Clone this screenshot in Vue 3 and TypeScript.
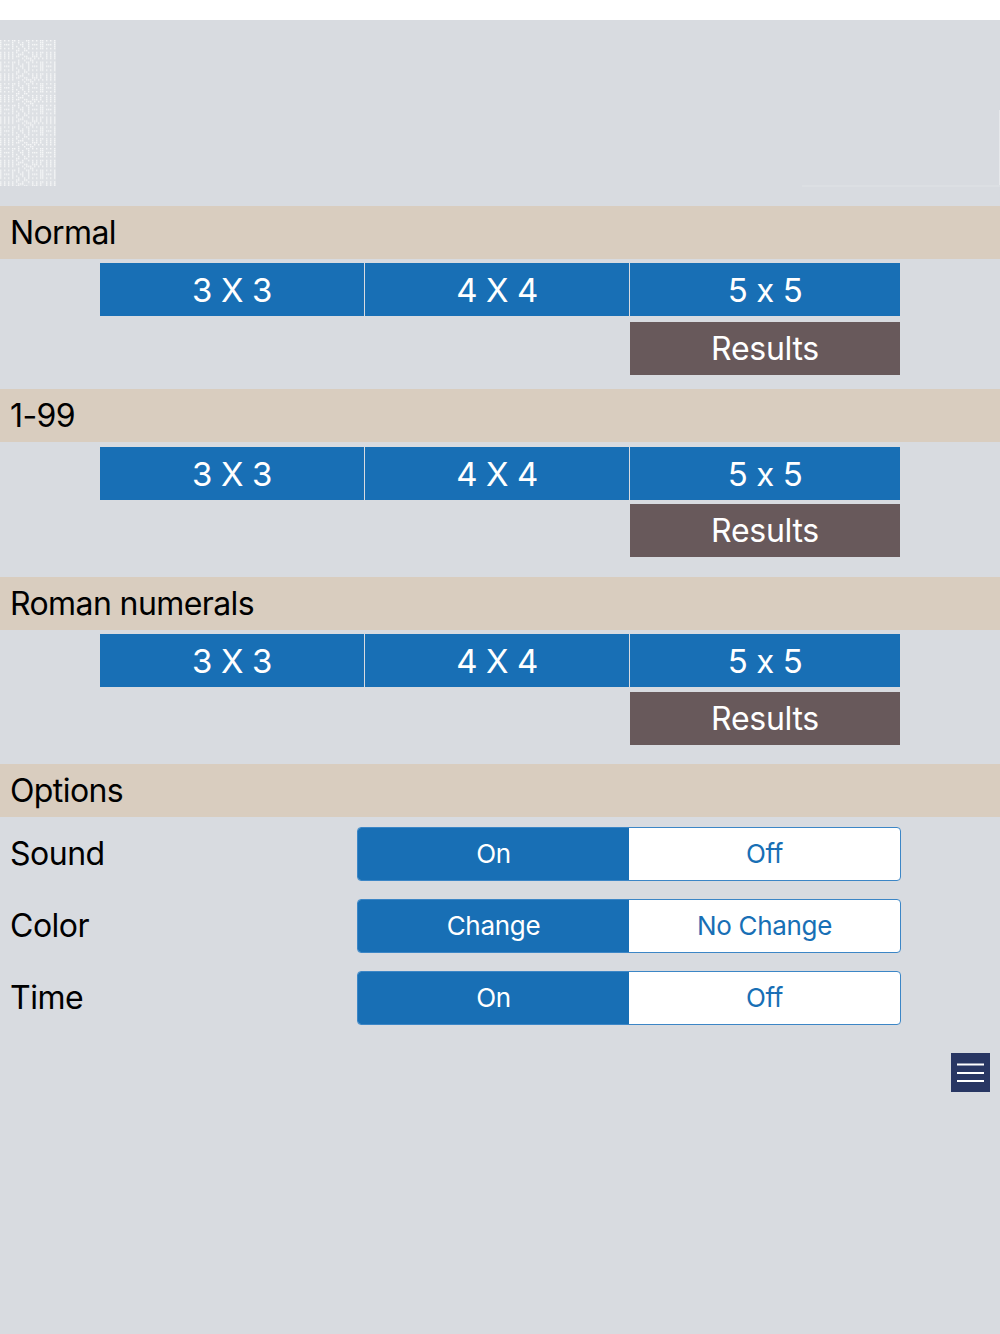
<script setup lang="ts">
const sections = [
  { title: 'Normal', pad: 'a' },
  { title: '1-99', pad: 'b' },
  { title: 'Roman numerals', pad: 'c' }
]

const options = [
  { label: 'Sound', on: 'On', off: 'Off' },
  { label: 'Color', on: 'Change', off: 'No Change' },
  { label: 'Time', on: 'On', off: 'Off' }
]

// the faint tile behind the logo, repeated down the column
const tileRows = [
  '#.#.#.##.#...##.#.#.##.#.#.#',
  '#.....#..#.#..#.....##.....#',
  '#.###.#...##..#.###.##.###.#',
  '#.....#.#..#..#.....##.....#',
  '#.#.#.#..#..#.#.#.#.##.#.#.#',
  '........##..##..............',
  '#.#.#.#.#..#..#.#.#.##.#.#.#',
  '#.#.#.#..###....#.#.#..#.#.#',
  '#.#.#.#.##..##..###.#..#.#.#',
  '#.#.#.#....#.###.#.#.#.#.#.#',
  '.........#..#..##...........'
]

const dots = tileRows.flatMap((row, y) =>
  row.split('').flatMap((c, x) => (c === '#' ? [{ x: x * 2, y: y * 1.96 }] : []))
)
</script>

<template>
  <div class="page">
    <div class="logo-band">
      <svg class="logo-tile" width="56" height="146" viewBox="0 0 56 146">
        <defs>
          <pattern id="tile" width="56" height="21.6" patternUnits="userSpaceOnUse">
            <rect v-for="(d, i) in dots" :key="i" :x="d.x" :y="d.y" width="1.4" height="1.4" fill="#f6f7f8" />
          </pattern>
        </defs>
        <rect width="56" height="146" fill="#dde0e4" />
        <rect width="56" height="146" fill="url(#tile)" />
      </svg>
      <div class="logo-ghost"></div>
    </div>

    <section v-for="s in sections" :key="s.title" class="mode" :class="`mode--${s.pad}`">
      <h2 class="band">{{ s.title }}</h2>
      <div class="grid">
        <button class="btn btn--size" type="button">3 X 3</button>
        <button class="btn btn--size" type="button">4 X 4</button>
        <button class="btn btn--size" type="button">5 x 5</button>
        <button class="btn btn--results" type="button">Results</button>
      </div>
    </section>

    <h2 class="band">Options</h2>
    <div class="options">
      <div v-for="o in options" :key="o.label" class="option">
        <span class="option__label">{{ o.label }}</span>
        <div class="segment">
          <span class="segment__item segment__item--active">{{ o.on }}</span>
          <span class="segment__item">{{ o.off }}</span>
        </div>
      </div>
    </div>

    <div class="menu-row">
      <button class="menu" type="button" aria-label="Menu">
        <svg width="39" height="39" viewBox="0 0 39 39">
          <path d="M6 11.5h27M6 20h27M6 28h27" stroke="#fff" stroke-width="2" fill="none" />
        </svg>
      </button>
    </div>
  </div>
</template>

<style>
html,
body {
  margin: 0;
  background: #d8dbe0;
}
</style>

<style scoped>
.page {
  min-height: 1314px;
  border-top: 20px solid #fff;
  background: #d8dbe0;
  color: #000;
  font-family: Inter, Roboto, "Liberation Sans", sans-serif;
  font-feature-settings: "calt" 0;
}

.logo-band {
  display: flex;
  justify-content: space-between;
  align-items: flex-start;
  height: 186px;
  padding-top: 20px;
  box-sizing: border-box;
}

.logo-tile {
  display: block;
}

.logo-ghost {
  position: relative;
  width: 198px;
  height: 147px;
  box-sizing: border-box;
  border-bottom: 2px solid #dcdfe3;
}

.logo-ghost::after {
  content: "";
  position: absolute;
  top: 70px;
  right: 0;
  bottom: 0;
  width: 1px;
  background: #e6e8eb;
}

.band {
  margin: 0;
  height: 53px;
  padding-left: 10px;
  background: #d9cdbf;
  font-size: 32px;
  font-weight: 400;
  letter-spacing: -0.6px;
  line-height: 54px;
}

.mode--a {
  padding-bottom: 14px;
}

.mode--b {
  padding-bottom: 20px;
}

.mode--c {
  padding-bottom: 19px;
}

.grid {
  display: grid;
  grid-template-columns: 264px 264px 270px;
  column-gap: 1px;
  row-gap: 5px;
  margin: 4px 0 0 100px;
}

.mode--a .grid {
  row-gap: 6px;
}

.mode--b .grid {
  row-gap: 4px;
  margin-top: 5px;
}

.btn {
  height: 53px;
  padding: 0;
  border: 0;
  color: #fff;
  font-family: inherit;
  font-size: 33px;
  font-weight: 400;
  letter-spacing: -0.4px;
  line-height: 55px;
}

.btn--size {
  background: #186fb5;
}

.btn--results {
  grid-column: 3;
  background: #68595b;
  font-size: 32px;
  letter-spacing: -0.3px;
  line-height: 53px;
}

.options {
  display: flex;
  flex-direction: column;
  gap: 18px;
  padding-top: 10px;
}

.option {
  display: flex;
  align-items: center;
  height: 54px;
  padding-left: 10px;
}

.option__label {
  width: 347px;
  font-size: 32px;
  letter-spacing: -0.5px;
  line-height: 52px;
}

.segment {
  display: flex;
  width: 544px;
  height: 54px;
  box-sizing: border-box;
  overflow: hidden;
  border: 1px solid #3c86c6;
  border-radius: 4px;
  background: #fff;
}

.segment__item {
  flex: 1;
  color: #186fb5;
  font-size: 26px;
  letter-spacing: -0.3px;
  line-height: 52px;
  text-align: center;
}

.segment__item--active {
  flex: 0 0 271px;
  background: #186fb5;
  color: #fff;
}

.menu-row {
  display: flex;
  justify-content: flex-end;
  padding: 28px 10px 0 0;
}

.menu {
  display: block;
  width: 39px;
  height: 39px;
  padding: 0;
  border: 0;
  background: #283663;
}

.menu svg {
  display: block;
}
</style>
